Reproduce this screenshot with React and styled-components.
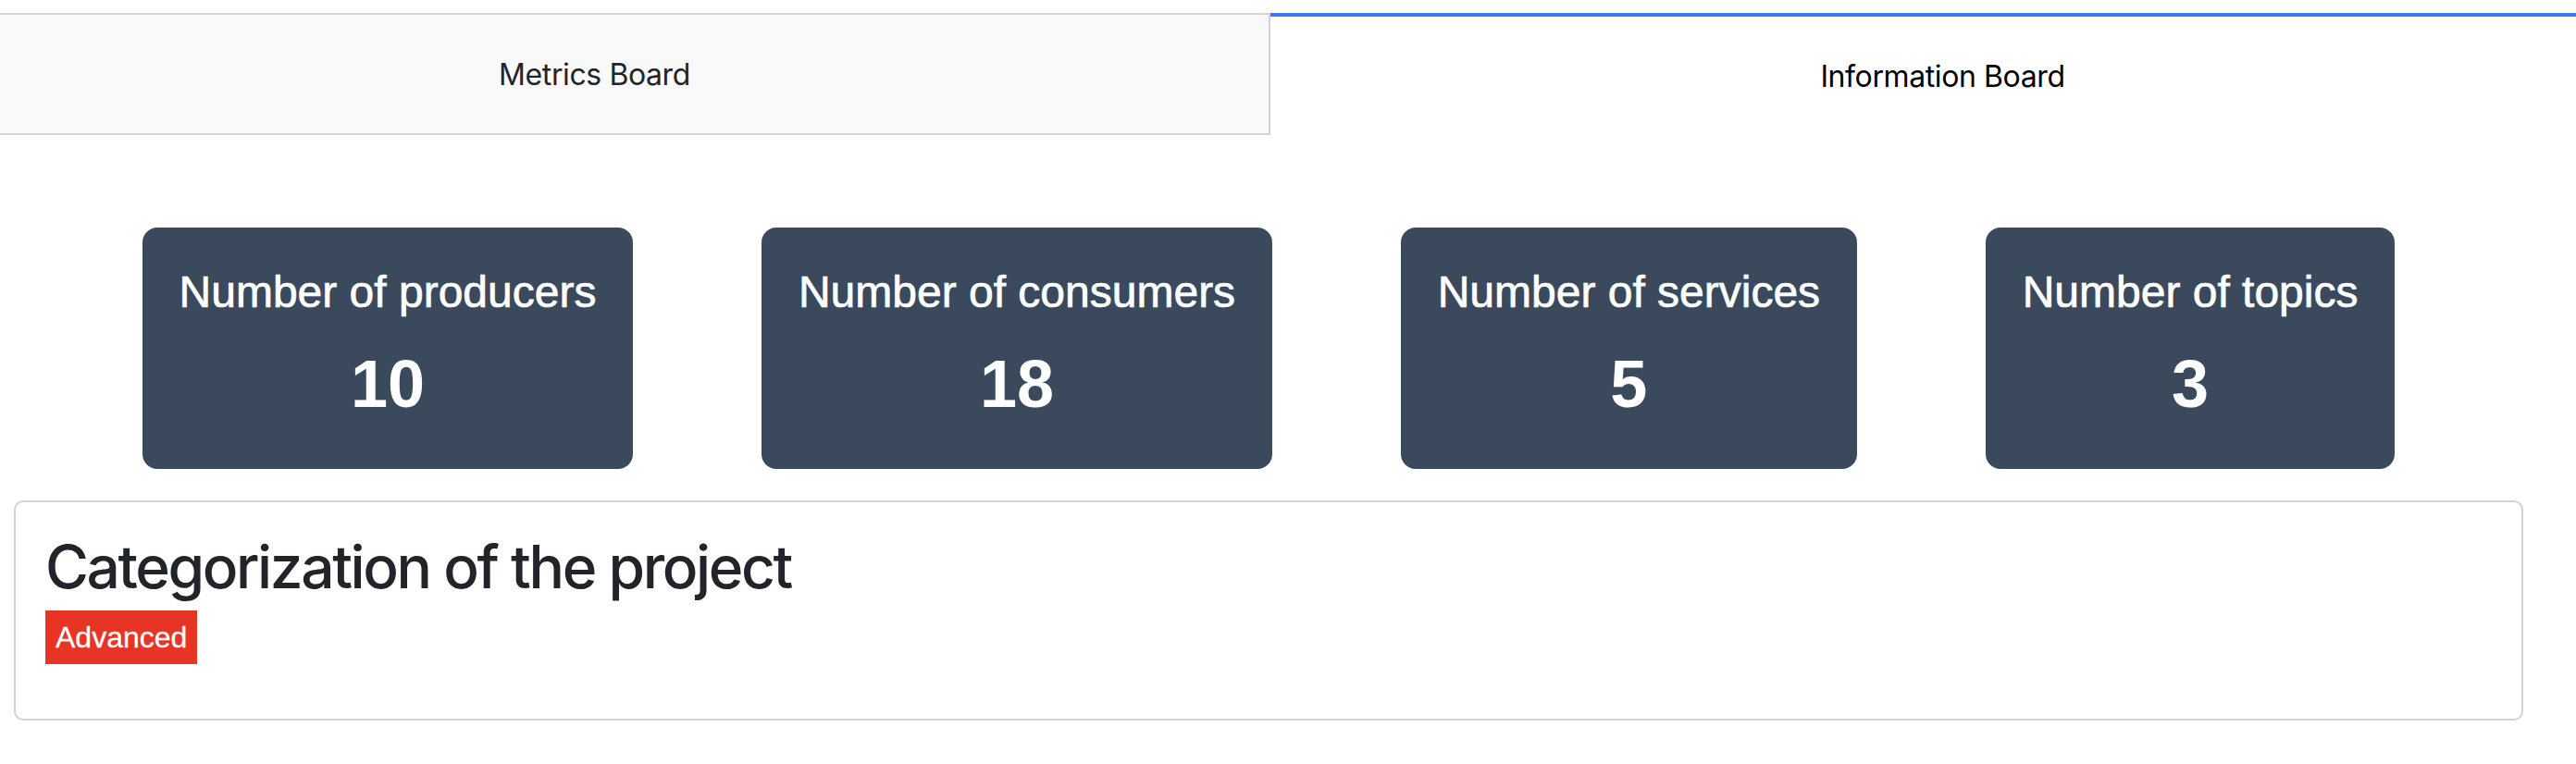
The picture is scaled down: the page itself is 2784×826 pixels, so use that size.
import styled, { createGlobalStyle } from "styled-components";

const GlobalStyle = createGlobalStyle`
    body {
        margin: 0;
        background: #ffffff;
        font-family: Inter, "Noto Sans", sans-serif;
    }
`
const TabBar = styled.div`
    display: grid;
    grid-template-columns: 1373px 1fr;
    margin-top: 14px;
    height: 132px;
`
const Tab = styled.div`
    box-sizing: border-box;
    display: flex;
    align-items: center;
    justify-content: center;
    padding-left: ${p => p.$shift > 0 ? p.$shift : 0}px;
    padding-right: ${p => p.$shift < 0 ? -p.$shift : 0}px;
    background: ${p => p.$active ? "#ffffff" : "#f9f9f9"};
    border-top: ${p => p.$active ? "4px solid #3d7be8" : "2px solid #d3d3d3"};
    border-bottom: ${p => p.$active ? "none" : "2px solid #d3d3d3"};
    border-right: ${p => p.$active ? "none" : "2px solid #d3d3d3"};
    color: ${p => p.$active ? "#000000" : "#212529"};
    font-size: 32px;
    letter-spacing: -0.4px;
    cursor: pointer;
`
const Stats = styled.div`
    display: flex;
    justify-content: space-evenly;
    align-items: flex-start;
    margin: 100px 57px 0 15px;
`
const StatCard = styled.div`
    background: #3a4a5c;
    border-radius: 16px;
    padding: 42px 40px 50px;
    color: #ffffff;
    text-align: center;
    font-family: "Liberation Sans", Arial, sans-serif;
`
const StatLabel = styled.h3`
    margin: 0 0 31px;
    font-size: 48px;
    line-height: 55px;
    font-weight: 400;
    -webkit-text-stroke: 0.7px #ffffff;
`
const StatValue = styled.div`
    font-size: 72px;
    line-height: 83px;
    font-weight: 700;
`
const Panel = styled.div`
    margin: 34px 57px 0 15px;
    border: 2px solid #d3d3d3;
    border-radius: 10px;
    padding: 32px 32px 59px;
`
const PanelTitle = styled.h2`
    margin: 0 0 8px;
    font-size: 64px;
    line-height: 1.2;
    font-weight: 500;
    letter-spacing: -2.4px;
    color: #212529;
`
const Badge = styled.span`
    display: inline-block;
    background: #e73424;
    color: #ffffff;
    font-family: "Liberation Sans", Arial, sans-serif;
    font-size: 32px;
    line-height: 38px;
    padding: 10px 11px;
    -webkit-text-stroke: 0.3px #ffffff;
`

const stats = [
    { label: "Number of producers", value: 10 },
    { label: "Number of consumers", value: 18 },
    { label: "Number of services", value: 5 },
    { label: "Number of topics", value: 3 },
]

const App = () => {
    return (
        <>
            <GlobalStyle />
            <TabBar>
                <Tab $shift={-86}>Metrics Board</Tab>
                <Tab $active $shift={42}>Information Board</Tab>
            </TabBar>
            <Stats>
                {stats.map(s => (
                    <StatCard key={s.label}>
                        <StatLabel>{s.label}</StatLabel>
                        <StatValue>{s.value}</StatValue>
                    </StatCard>
                ))}
            </Stats>
            <Panel>
                <PanelTitle>Categorization of the project</PanelTitle>
                <Badge>Advanced</Badge>
            </Panel>
        </>
    )
}

export default App
